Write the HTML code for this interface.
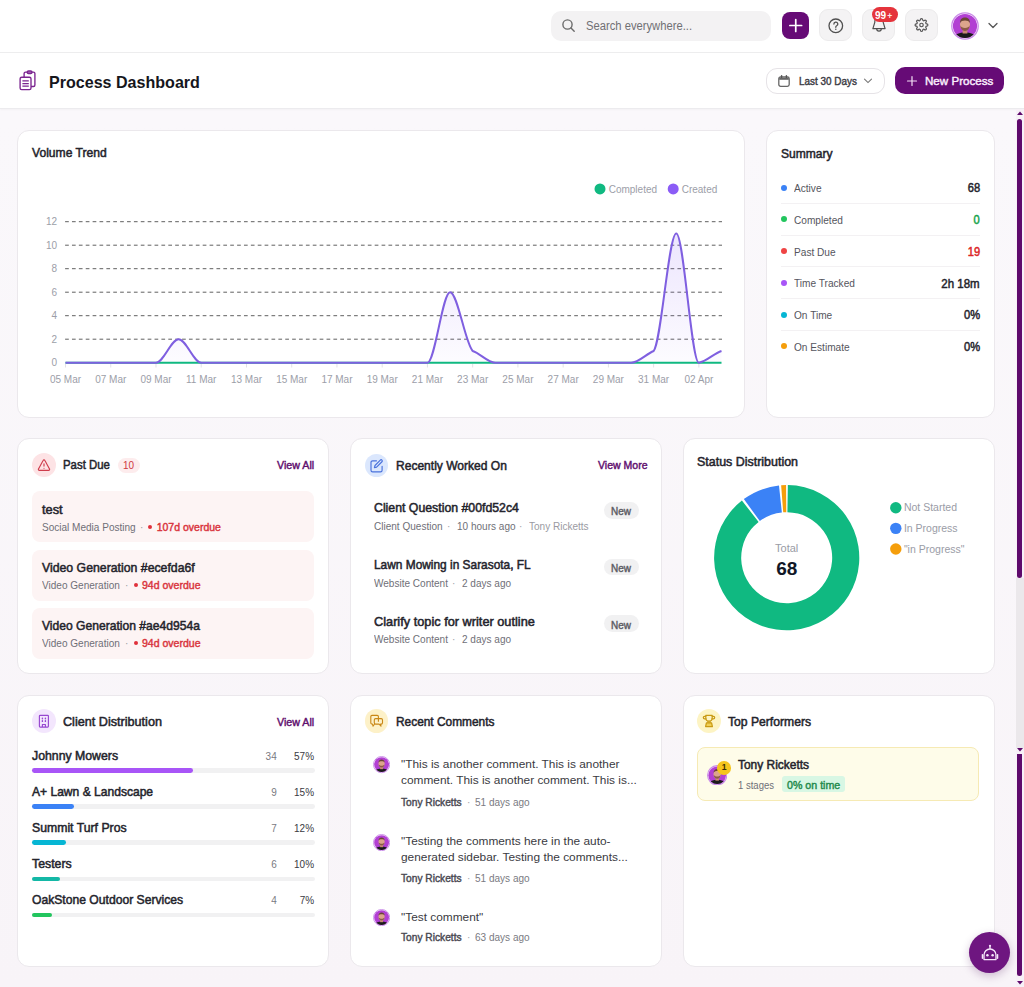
<!DOCTYPE html>
<html><head><meta charset="utf-8">
<style>
*{box-sizing:border-box;margin:0;padding:0}
html,body{width:1024px;height:987px;overflow:hidden;background:linear-gradient(#faf8fb 0,#faf8fb 120px,#f8f4f8 987px);font-family:"Liberation Sans",sans-serif;color:#1f2028}
.abs{position:absolute}
.nw{white-space:nowrap}
.card{position:absolute;background:#fff;border:1px solid #ebe8ec;border-radius:12px}
</style></head><body>

<div class="abs" style="left:0.00px;top:0.00px;width:1024.00px;height:53.00px;background:#fff;border-radius:0px;border-bottom:1px solid #ededee"></div>
<div class="abs" style="left:551.00px;top:11.00px;width:220.00px;height:30.00px;background:#f3f2f3;border-radius:10px;"></div>
<svg class="abs" style="left:561.00px;top:18.00px;overflow:visible" width="15" height="15" viewBox="0 0 15 15"><circle cx="6.5" cy="6.5" r="4.6" fill="none" stroke="#6b6b6b" stroke-width="1.4"/><path d="M10 10 L13.2 13.2" stroke="#6b6b6b" stroke-width="1.4" stroke-linecap="round"/></svg>
<div class="abs nw" style="left:586.00px;transform-origin:0 0;top:20.00px;font-size:12px;line-height:1;font-weight:400;color:#707074;transform:scaleX(0.935);">Search everywhere...</div>
<div class="abs" style="left:781.50px;top:12.00px;width:27.50px;height:27.00px;background:#660b76;border-radius:8px;"></div>
<svg class="abs" style="left:781.50px;top:12.00px;overflow:visible" width="27.5" height="27" viewBox="0 0 27.5 27"><path d="M13.75 7.6V19.4M7.85 13.5H19.65" stroke="#fff" stroke-width="1.7" stroke-linecap="round"/></svg>
<div class="abs" style="left:819.00px;top:9.00px;width:33.00px;height:32.00px;background:#f4f3f4;border-radius:9px;border:1px solid #ecebec"></div>
<div class="abs" style="left:862.00px;top:9.00px;width:33.00px;height:32.00px;background:#f4f3f4;border-radius:9px;border:1px solid #ecebec"></div>
<div class="abs" style="left:905.00px;top:9.00px;width:33.00px;height:32.00px;background:#f4f3f4;border-radius:9px;border:1px solid #ecebec"></div>
<svg class="abs" style="left:819.00px;top:9.00px;overflow:visible" width="33" height="32" viewBox="0 0 33 32"><g fill="none" stroke="#505050" stroke-width="1.3" stroke-linecap="round"><circle cx="16.8" cy="16.8" r="6.8"/><path d="M14.9 15a1.95 1.95 0 1 1 2.8 1.75c-.6.3-.9.7-.9 1.3v.3"/></g><circle cx="16.8" cy="20.2" r=".75" fill="#505050"/></svg>
<svg class="abs" style="left:862.00px;top:9.00px;overflow:visible" width="33" height="32" viewBox="0 0 33 32"><g fill="none" stroke="#505050" stroke-width="1.2" stroke-linejoin="round" stroke-linecap="round"><path d="M12.8 12.5v.8L10.9 19.6h12.2l-1.9-6.3v-.8a4.2 4.2 0 0 0-8.4 0Z"/><path d="M14.7 19.8a2.3 2.3 0 0 0 4.6 0"/></g></svg>
<div class="abs" style="left:872.00px;top:7.20px;width:25.80px;height:14.80px;background:#e5343c;border-radius:7.4px;"></div>
<div class="abs nw" style="left:874.8px;top:10px;font-size:10.8px;line-height:1;font-weight:700;color:#fff;transform:scaleX(0.93);transform-origin:0 0">99</div>
<div class="abs nw" style="left:887.3px;top:11.5px;font-size:8.5px;line-height:1;font-weight:700;color:#fde8e8">+</div>
<svg class="abs" style="left:905.00px;top:9.00px;overflow:visible" width="33" height="32" viewBox="0 0 33 32"><g transform="translate(9.5,9) scale(0.583)"><path d="M12 15a3 3 0 1 0 0-6 3 3 0 0 0 0 6Z" fill="none" stroke="#555" stroke-width="2.05"/><path d="M19.4 15a1.65 1.65 0 0 0 .33 1.82l.06.06a2 2 0 1 1-2.83 2.83l-.06-.06a1.65 1.65 0 0 0-1.820-.33 1.65 1.65 0 0 0-1 1.51V21a2 2 0 1 1-4 0v-.09A1.65 1.65 0 0 0 9 19.4a1.65 1.65 0 0 0-1.82.33l-.06.06a2 2 0 1 1-2.83-2.83l.06-.06A1.65 1.65 0 0 0 4.68 15a1.65 1.65 0 0 0-1.51-1H3a2 2 0 1 1 0-4h.09A1.65 1.65 0 0 0 4.6 9a1.65 1.65 0 0 0-.33-1.82l-.06-.06a2 2 0 1 1 2.830-2.83l.06.06A1.65 1.65 0 0 0 9 4.68a1.65 1.65 0 0 0 1-1.51V3a2 2 0 1 1 4 0v.09a1.65 1.65 0 0 0 1 1.51 1.65 1.65 0 0 0 1.82-.33l.06-.06a2 2 0 1 1 2.83 2.83l-.06.06A1.65 1.65 0 0 0 19.4 9a1.65 1.65 0 0 0 1.51 1H21a2 2 0 1 1 0 4h-.09a1.65 1.65 0 0 0-1.51 1Z" fill="none" stroke="#555" stroke-width="2.05"/></g></svg>
<svg class="abs" style="left:951.00px;top:12.00px;overflow:visible" width="28" height="28" viewBox="0 0 28 28"><defs><clipPath id="av1"><circle cx="14" cy="14" r="12.1"/></clipPath></defs><circle cx="14" cy="14" r="13.2" fill="#fff" stroke="#c98ae8" stroke-width="1.3"/><g clip-path="url(#av1)"><rect width="28" height="28" fill="#b23fd3"/><path d="M2 28c.8-5.5 5.5-7.6 12-7.6s11.2 2.1 12 7.6Z" fill="#1c1a1c"/><rect x="11.6" y="17" width="4.8" height="4.5" fill="#c98a74"/><ellipse cx="14" cy="12.6" rx="5" ry="6" fill="#dca48c"/><path d="M9.2 13.5c.3 3.6 2.2 5.4 4.8 5.4s4.5-1.8 4.8-5.4c-.8 1.6-2.4 2.4-4.8 2.4s-4-.8-4.8-2.4Z" fill="#8a5a48"/><path d="M9 11c0-3.6 2.2-5.4 5-5.4s5 1.8 5 5.4c-.9-1.9-2.6-2.6-5-2.6S9.9 9.1 9 11Z" fill="#6b4636"/></g></svg>
<svg class="abs" style="left:987.00px;top:21.00px;overflow:visible" width="12" height="9" viewBox="0 0 12 9"><path d="M2 2.5l4 4 4-4" fill="none" stroke="#555" stroke-width="1.3" stroke-linecap="round" stroke-linejoin="round"/></svg>
<div class="abs" style="left:0.00px;top:53.00px;width:1024.00px;height:56.00px;background:#fff;border-radius:0px;border-bottom:1px solid #ecebee;box-shadow:0 1px 2px rgba(0,0,0,.03)"></div>
<svg class="abs" style="left:14.00px;top:66.00px;overflow:visible" width="26" height="28" viewBox="0 0 26 28"><g fill="none" stroke="#7b2590" stroke-width="1.35" stroke-linejoin="round"><path d="M10.1 11.2V7.6a1.5 1.5 0 0 1 1.5-1.5h7.8a1.5 1.5 0 0 1 1.5 1.5V19a1.5 1.5 0 0 1-1.5 1.5H17"/><rect x="13.2" y="5" width="4.8" height="2.6" rx="1.3"/><rect x="6.1" y="11.2" width="10.9" height="12.4" rx="1.6"/><path d="M8.4 14.8h6.4M8.4 17.5h6.4M8.4 20.1h6.4" stroke-width="1.25"/></g></svg>
<div class="abs nw" style="left:49.00px;transform-origin:0 0;top:75.00px;font-size:16.9px;line-height:1;font-weight:700;color:#16161c;transform:scaleX(0.951);">Process Dashboard</div>
<div class="abs" style="left:766.00px;top:68.00px;width:118.50px;height:25.50px;background:#fff;border-radius:11px;border:1px solid #e6e3e7"></div>
<svg class="abs" style="left:777.00px;top:74.00px;overflow:visible" width="14" height="14" viewBox="0 0 14 14"><rect x="1.8" y="2.9" width="10.4" height="9.4" rx="1.8" fill="none" stroke="#666" stroke-width="1.3"/><path d="M2.2 4.6h9.6" stroke="#666" stroke-width="2.4"/><path d="M4.6 1.6v1.8M9.4 1.6v1.8" stroke="#555" stroke-width="1.4" stroke-linecap="round"/></svg>
<div class="abs nw" style="left:798.70px;transform-origin:0 0;top:77.00px;font-size:10.2px;line-height:1;font-weight:400;color:#3c3c44;transform:scaleX(0.974);-webkit-text-stroke:0.4px #3c3c44;">Last 30 Days</div>
<svg class="abs" style="left:863.00px;top:77.00px;overflow:visible" width="10" height="8" viewBox="0 0 10 8"><path d="M1.5 2.2l3.5 3.4 3.5-3.4" fill="none" stroke="#777" stroke-width="1.1" stroke-linecap="round"/></svg>
<div class="abs" style="left:895.00px;top:67.00px;width:108.50px;height:27.00px;background:#660b76;border-radius:10px;"></div>
<svg class="abs" style="left:906.00px;top:75.00px;overflow:visible" width="12" height="12" viewBox="0 0 12 12"><path d="M6 1.5v9M1.5 6h9" stroke="#f3dff6" stroke-width="1.2" stroke-linecap="round"/></svg>
<div class="abs nw" style="left:924.60px;transform-origin:0 0;top:75.00px;font-size:11.7px;line-height:1;font-weight:400;color:#fbeefd;transform:scaleX(0.992);-webkit-text-stroke:0.42px #fbeefd;">New Process</div>
<div class="abs" style="left:1016.00px;top:109.00px;width:8.00px;height:878.00px;background:#f7f1f7;border-radius:0px;"></div>
<div class="abs" style="left:1016.00px;top:578.00px;width:8.00px;height:170.00px;background:#ebe8eb;border-radius:0px;"></div>
<div class="abs" style="left:1017.00px;top:119.00px;width:5.00px;height:459.00px;background:#5e0a6c;border-radius:3px;"></div>
<svg class="abs" style="left:1016.00px;top:110.00px;overflow:visible" width="8" height="6" viewBox="0 0 8 6"><path d="M1 5L4 1.5L7 5Z" fill="#5e0a6c"/></svg>
<svg class="abs" style="left:1016.00px;top:747.00px;overflow:visible" width="8" height="6" viewBox="0 0 8 6"><path d="M1 1L4 4.5L7 1Z" fill="#5e0a6c"/></svg>
<div class="abs" style="left:1017.00px;top:754.00px;width:5.00px;height:222.00px;background:#5e0a6c;border-radius:0px;border-radius:0 0 3px 3px"></div>
<svg class="abs" style="left:1016.00px;top:980.00px;overflow:visible" width="8" height="6" viewBox="0 0 8 6"><path d="M1 1L4 4.5L7 1Z" fill="#5e0a6c"/></svg>
<div class="card" style="left:17px;top:130px;width:728px;height:288px"></div>
<div class="card" style="left:766px;top:130px;width:229px;height:288px"></div>
<div class="card" style="left:17px;top:438px;width:312px;height:236px"></div>
<div class="card" style="left:350px;top:438px;width:312px;height:236px"></div>
<div class="card" style="left:683px;top:438px;width:312px;height:236px"></div>
<div class="card" style="left:17px;top:695px;width:312px;height:272px"></div>
<div class="card" style="left:350px;top:695px;width:312px;height:272px"></div>
<div class="card" style="left:683px;top:695px;width:312px;height:272px"></div>
<div class="abs nw" style="left:32.20px;transform-origin:0 0;top:147.00px;font-size:12.3px;line-height:1;font-weight:400;color:#24242c;transform:scaleX(0.984);-webkit-text-stroke:0.5px #24242c;">Volume Trend</div>
<svg class="abs" style="left:0;top:0" width="1024" height="430" viewBox="0 0 1024 430">
<defs><linearGradient id="ga" x1="0" y1="0" x2="0" y2="1"><stop offset="0" stop-color="#8b5cf6" stop-opacity=".16"/><stop offset="1" stop-color="#8b5cf6" stop-opacity=".02"/></linearGradient></defs>
<g font-family="Liberation Sans" font-size="10" fill="#9c9ea8"><text x="57" y="366.40" text-anchor="end">0</text><line x1="65.1" y1="339.20" x2="722" y2="339.20" stroke="#606060" stroke-width="1" stroke-dasharray="3.7 3.18"/><text x="57" y="342.90" text-anchor="end">2</text><line x1="65.1" y1="315.70" x2="722" y2="315.70" stroke="#606060" stroke-width="1" stroke-dasharray="3.7 3.18"/><text x="57" y="319.40" text-anchor="end">4</text><line x1="65.1" y1="292.20" x2="722" y2="292.20" stroke="#606060" stroke-width="1" stroke-dasharray="3.7 3.18"/><text x="57" y="295.90" text-anchor="end">6</text><line x1="65.1" y1="268.70" x2="722" y2="268.70" stroke="#606060" stroke-width="1" stroke-dasharray="3.7 3.18"/><text x="57" y="272.40" text-anchor="end">8</text><line x1="65.1" y1="245.20" x2="722" y2="245.20" stroke="#606060" stroke-width="1" stroke-dasharray="3.7 3.18"/><text x="57" y="248.90" text-anchor="end">10</text><line x1="65.1" y1="221.70" x2="722" y2="221.70" stroke="#606060" stroke-width="1" stroke-dasharray="3.7 3.18"/><text x="57" y="225.40" text-anchor="end">12</text><line x1="65.50" y1="364" x2="65.50" y2="367.5" stroke="#e2e2e6" stroke-width="1"/><text x="65.50" y="383.4" text-anchor="middle">05 Mar</text><line x1="110.74" y1="364" x2="110.74" y2="367.5" stroke="#e2e2e6" stroke-width="1"/><text x="110.74" y="383.4" text-anchor="middle">07 Mar</text><line x1="155.98" y1="364" x2="155.98" y2="367.5" stroke="#e2e2e6" stroke-width="1"/><text x="155.98" y="383.4" text-anchor="middle">09 Mar</text><line x1="201.22" y1="364" x2="201.22" y2="367.5" stroke="#e2e2e6" stroke-width="1"/><text x="201.22" y="383.4" text-anchor="middle">11 Mar</text><line x1="246.47" y1="364" x2="246.47" y2="367.5" stroke="#e2e2e6" stroke-width="1"/><text x="246.47" y="383.4" text-anchor="middle">13 Mar</text><line x1="291.71" y1="364" x2="291.71" y2="367.5" stroke="#e2e2e6" stroke-width="1"/><text x="291.71" y="383.4" text-anchor="middle">15 Mar</text><line x1="336.95" y1="364" x2="336.95" y2="367.5" stroke="#e2e2e6" stroke-width="1"/><text x="336.95" y="383.4" text-anchor="middle">17 Mar</text><line x1="382.19" y1="364" x2="382.19" y2="367.5" stroke="#e2e2e6" stroke-width="1"/><text x="382.19" y="383.4" text-anchor="middle">19 Mar</text><line x1="427.43" y1="364" x2="427.43" y2="367.5" stroke="#e2e2e6" stroke-width="1"/><text x="427.43" y="383.4" text-anchor="middle">21 Mar</text><line x1="472.67" y1="364" x2="472.67" y2="367.5" stroke="#e2e2e6" stroke-width="1"/><text x="472.67" y="383.4" text-anchor="middle">23 Mar</text><line x1="517.91" y1="364" x2="517.91" y2="367.5" stroke="#e2e2e6" stroke-width="1"/><text x="517.91" y="383.4" text-anchor="middle">25 Mar</text><line x1="563.16" y1="364" x2="563.16" y2="367.5" stroke="#e2e2e6" stroke-width="1"/><text x="563.16" y="383.4" text-anchor="middle">27 Mar</text><line x1="608.40" y1="364" x2="608.40" y2="367.5" stroke="#e2e2e6" stroke-width="1"/><text x="608.40" y="383.4" text-anchor="middle">29 Mar</text><line x1="653.64" y1="364" x2="653.64" y2="367.5" stroke="#e2e2e6" stroke-width="1"/><text x="653.64" y="383.4" text-anchor="middle">31 Mar</text><line x1="698.88" y1="364" x2="698.88" y2="367.5" stroke="#e2e2e6" stroke-width="1"/><text x="698.88" y="383.4" text-anchor="middle">02 Apr</text></g>
<path d="M65.50,362.70 C73.04,362.70 80.58,362.70 88.12,362.70 C95.66,362.70 103.20,362.70 110.74,362.70 C118.28,362.70 125.82,362.70 133.36,362.70 C140.90,362.70 148.44,362.70 155.98,362.70 C163.52,362.70 171.06,339.20 178.60,339.20 C186.14,339.20 193.68,362.70 201.22,362.70 C208.76,362.70 216.30,362.70 223.84,362.70 C231.39,362.70 238.93,362.70 246.47,362.70 C254.01,362.70 261.55,362.70 269.09,362.70 C276.63,362.70 284.17,362.70 291.71,362.70 C299.25,362.70 306.79,362.70 314.33,362.70 C321.87,362.70 329.41,362.70 336.95,362.70 C344.49,362.70 352.03,362.70 359.57,362.70 C367.11,362.70 374.65,362.70 382.19,362.70 C389.73,362.70 397.27,362.70 404.81,362.70 C412.35,362.70 419.89,362.70 427.43,362.70 C434.97,362.70 442.51,292.20 450.05,292.20 C457.59,292.20 465.13,343.12 472.67,350.95 C480.21,353.21 487.75,362.70 495.29,362.70 C502.83,362.70 510.37,362.70 517.91,362.70 C525.45,362.70 532.99,362.70 540.53,362.70 C548.07,362.70 555.61,362.70 563.16,362.70 C570.70,362.70 578.24,362.70 585.78,362.70 C593.32,362.70 600.86,362.70 608.40,362.70 C615.94,362.70 623.48,362.70 631.02,362.70 C638.56,362.70 646.10,353.97 653.64,350.95 C661.18,343.12 668.72,233.45 676.26,233.45 C683.80,233.45 691.34,362.70 698.88,362.70 C706.42,361.57 713.96,353.21 721.50,350.95 L721.50,362.70 L65.50,362.70 Z" fill="url(#ga)"/>
<line x1="65.5" y1="362.7" x2="721.5" y2="362.7" stroke="#10b981" stroke-width="2"/>
<path d="M65.50,362.70 C73.04,362.70 80.58,362.70 88.12,362.70 C95.66,362.70 103.20,362.70 110.74,362.70 C118.28,362.70 125.82,362.70 133.36,362.70 C140.90,362.70 148.44,362.70 155.98,362.70 C163.52,362.70 171.06,339.20 178.60,339.20 C186.14,339.20 193.68,362.70 201.22,362.70 C208.76,362.70 216.30,362.70 223.84,362.70 C231.39,362.70 238.93,362.70 246.47,362.70 C254.01,362.70 261.55,362.70 269.09,362.70 C276.63,362.70 284.17,362.70 291.71,362.70 C299.25,362.70 306.79,362.70 314.33,362.70 C321.87,362.70 329.41,362.70 336.95,362.70 C344.49,362.70 352.03,362.70 359.57,362.70 C367.11,362.70 374.65,362.70 382.19,362.70 C389.73,362.70 397.27,362.70 404.81,362.70 C412.35,362.70 419.89,362.70 427.43,362.70 C434.97,362.70 442.51,292.20 450.05,292.20 C457.59,292.20 465.13,343.12 472.67,350.95 C480.21,353.21 487.75,362.70 495.29,362.70 C502.83,362.70 510.37,362.70 517.91,362.70 C525.45,362.70 532.99,362.70 540.53,362.70 C548.07,362.70 555.61,362.70 563.16,362.70 C570.70,362.70 578.24,362.70 585.78,362.70 C593.32,362.70 600.86,362.70 608.40,362.70 C615.94,362.70 623.48,362.70 631.02,362.70 C638.56,362.70 646.10,353.97 653.64,350.95 C661.18,343.12 668.72,233.45 676.26,233.45 C683.80,233.45 691.34,362.70 698.88,362.70 C706.42,361.57 713.96,353.21 721.50,350.95" fill="none" stroke="#7f5fe0" stroke-width="2"/>
<circle cx="600" cy="188.9" r="5.5" fill="#10b981"/><text x="608.7" y="192.5" font-family="Liberation Sans" font-size="10" fill="#9c9ea8">Completed</text>
<circle cx="673.2" cy="188.9" r="5.5" fill="#8b5cf6"/><text x="681.7" y="192.5" font-family="Liberation Sans" font-size="10" fill="#9c9ea8">Created</text>
</svg>
<div class="abs nw" style="left:780.70px;transform-origin:0 0;top:148.00px;font-size:12.3px;line-height:1;font-weight:400;color:#24242c;transform:scaleX(0.981);-webkit-text-stroke:0.5px #24242c;">Summary</div>
<div class="abs" style="left:781.00px;top:184.70px;width:6.00px;height:6.00px;background:#3b82f6;border-radius:3px;"></div>
<div class="abs nw" style="left:794.30px;transform-origin:0 0;top:183.00px;font-size:11px;line-height:1;font-weight:400;color:#55555d;transform:scaleX(0.920);">Active</div>
<div class="abs nw" style="right:44.20px;transform-origin:100% 0;top:183.00px;font-size:11.9px;line-height:1;font-weight:400;color:#24242c;transform:scaleX(0.935);-webkit-text-stroke:0.48px #24242c;">68</div>
<div class="abs" style="left:781.00px;top:202.90px;width:199.00px;height:1.00px;background:#f3f1f3;border-radius:0px;"></div>
<div class="abs" style="left:781.00px;top:216.45px;width:6.00px;height:6.00px;background:#22c55e;border-radius:3px;"></div>
<div class="abs nw" style="left:794.30px;transform-origin:0 0;top:215.00px;font-size:11px;line-height:1;font-weight:400;color:#55555d;transform:scaleX(0.920);">Completed</div>
<div class="abs nw" style="right:44.20px;transform-origin:100% 0;top:215.00px;font-size:11.9px;line-height:1;font-weight:400;color:#16a34a;transform:scaleX(0.935);-webkit-text-stroke:0.48px #16a34a;">0</div>
<div class="abs" style="left:781.00px;top:234.65px;width:199.00px;height:1.00px;background:#f3f1f3;border-radius:0px;"></div>
<div class="abs" style="left:781.00px;top:248.20px;width:6.00px;height:6.00px;background:#ef4444;border-radius:3px;"></div>
<div class="abs nw" style="left:794.30px;transform-origin:0 0;top:247.00px;font-size:11px;line-height:1;font-weight:400;color:#55555d;transform:scaleX(0.920);">Past Due</div>
<div class="abs nw" style="right:44.20px;transform-origin:100% 0;top:247.00px;font-size:11.9px;line-height:1;font-weight:400;color:#dc2626;transform:scaleX(0.935);-webkit-text-stroke:0.48px #dc2626;">19</div>
<div class="abs" style="left:781.00px;top:266.40px;width:199.00px;height:1.00px;background:#f3f1f3;border-radius:0px;"></div>
<div class="abs" style="left:781.00px;top:279.95px;width:6.00px;height:6.00px;background:#a855f7;border-radius:3px;"></div>
<div class="abs nw" style="left:794.30px;transform-origin:0 0;top:278.00px;font-size:11px;line-height:1;font-weight:400;color:#55555d;transform:scaleX(0.920);">Time Tracked</div>
<div class="abs nw" style="right:44.20px;transform-origin:100% 0;top:279.00px;font-size:11.9px;line-height:1;font-weight:400;color:#24242c;transform:scaleX(0.966);-webkit-text-stroke:0.48px #24242c;">2h 18m</div>
<div class="abs" style="left:781.00px;top:298.15px;width:199.00px;height:1.00px;background:#f3f1f3;border-radius:0px;"></div>
<div class="abs" style="left:781.00px;top:311.70px;width:6.00px;height:6.00px;background:#06b6d4;border-radius:3px;"></div>
<div class="abs nw" style="left:794.30px;transform-origin:0 0;top:310.00px;font-size:11px;line-height:1;font-weight:400;color:#55555d;transform:scaleX(0.920);">On Time</div>
<div class="abs nw" style="right:44.20px;transform-origin:100% 0;top:310.00px;font-size:11.9px;line-height:1;font-weight:400;color:#24242c;transform:scaleX(0.935);-webkit-text-stroke:0.48px #24242c;">0%</div>
<div class="abs" style="left:781.00px;top:329.90px;width:199.00px;height:1.00px;background:#f3f1f3;border-radius:0px;"></div>
<div class="abs" style="left:781.00px;top:343.45px;width:6.00px;height:6.00px;background:#f59e0b;border-radius:3px;"></div>
<div class="abs nw" style="left:794.30px;transform-origin:0 0;top:342.00px;font-size:11px;line-height:1;font-weight:400;color:#55555d;transform:scaleX(0.920);">On Estimate</div>
<div class="abs nw" style="right:44.20px;transform-origin:100% 0;top:342.00px;font-size:11.9px;line-height:1;font-weight:400;color:#24242c;transform:scaleX(0.935);-webkit-text-stroke:0.48px #24242c;">0%</div>
<div class="abs" style="left:32.20px;top:453.00px;width:24.00px;height:24.00px;background:#fde3e5;border-radius:12px;"></div>
<svg class="abs" style="left:32.00px;top:453.00px;overflow:visible" width="24" height="24" viewBox="0 0 24 24"><g fill="none" stroke="#cf3c4c" stroke-width="1.15" stroke-linecap="round" stroke-linejoin="round"><path d="M17.5 15.9 12.9 7.4a1 1 0 0 0-1.8 0L6.5 15.9a1 1 0 0 0 .9 1.5h9.2a1 1 0 0 0 .9-1.5Z"/><path d="M12 10.9v2.2M12 15.2h.01"/></g></svg>
<div class="abs nw" style="left:63.40px;transform-origin:0 0;top:459.00px;font-size:12.3px;line-height:1;font-weight:400;color:#24242c;transform:scaleX(0.927);-webkit-text-stroke:0.5px #24242c;">Past Due</div>
<div class="abs" style="left:118.40px;top:458.30px;width:22.00px;height:15.00px;background:#fdeced;border-radius:8px;"></div>
<div class="abs nw" style="left:123.30px;transform-origin:0 0;top:460.00px;font-size:10.5px;line-height:1;font-weight:400;color:#d0383f;transform:scaleX(0.950);">10</div>
<div class="abs nw" style="left:277.10px;transform-origin:0 0;top:460.00px;font-size:10.5px;line-height:1;font-weight:400;color:#5f0f6e;transform:scaleX(1.017);-webkit-text-stroke:0.42px #5f0f6e;">View All</div>
<div class="abs" style="left:32.30px;top:491.40px;width:282.20px;height:51.00px;background:#fdf4f4;border-radius:8px;"></div>
<div class="abs nw" style="left:41.80px;transform-origin:0 0;top:504.00px;font-size:12.2px;line-height:1;font-weight:400;color:#24242c;transform:scaleX(1.051);-webkit-text-stroke:0.5px #24242c;">test</div>
<div class="abs nw" style="left:41.80px;transform-origin:0 0;top:522.00px;font-size:10.5px;line-height:1;font-weight:400;color:#6f6f77;transform:scaleX(0.955);">Social Media Posting</div>
<div class="abs nw" style="left:139.80px;transform-origin:0 0;top:522.00px;font-size:10.5px;line-height:1;font-weight:400;color:#9a9aa2;transform:scaleX(0.955);">·</div>
<div class="abs" style="left:148.30px;top:525.00px;width:4.20px;height:4.20px;background:#e0303a;border-radius:2.1px;"></div>
<div class="abs nw" style="left:156.70px;transform-origin:0 0;top:522.00px;font-size:10.5px;line-height:1;font-weight:400;color:#d9343d;-webkit-text-stroke:0.42px #d9343d;">107d overdue</div>
<div class="abs" style="left:32.30px;top:549.50px;width:282.20px;height:51.00px;background:#fdf4f4;border-radius:8px;"></div>
<div class="abs nw" style="left:41.80px;transform-origin:0 0;top:562.00px;font-size:12.2px;line-height:1;font-weight:400;color:#24242c;transform:scaleX(1.008);-webkit-text-stroke:0.5px #24242c;">Video Generation #ecefda6f</div>
<div class="abs nw" style="left:41.80px;transform-origin:0 0;top:580.00px;font-size:10.5px;line-height:1;font-weight:400;color:#6f6f77;transform:scaleX(0.955);">Video Generation</div>
<div class="abs nw" style="left:125.30px;transform-origin:0 0;top:580.00px;font-size:10.5px;line-height:1;font-weight:400;color:#9a9aa2;transform:scaleX(0.955);">·</div>
<div class="abs" style="left:133.80px;top:583.10px;width:4.20px;height:4.20px;background:#e0303a;border-radius:2.1px;"></div>
<div class="abs nw" style="left:142.20px;transform-origin:0 0;top:580.00px;font-size:10.5px;line-height:1;font-weight:400;color:#d9343d;transform:scaleX(1.003);-webkit-text-stroke:0.42px #d9343d;">94d overdue</div>
<div class="abs" style="left:32.30px;top:607.60px;width:282.20px;height:51.00px;background:#fdf4f4;border-radius:8px;"></div>
<div class="abs nw" style="left:41.80px;transform-origin:0 0;top:620.00px;font-size:12.2px;line-height:1;font-weight:400;color:#24242c;transform:scaleX(0.993);-webkit-text-stroke:0.5px #24242c;">Video Generation #ae4d954a</div>
<div class="abs nw" style="left:41.80px;transform-origin:0 0;top:638.00px;font-size:10.5px;line-height:1;font-weight:400;color:#6f6f77;transform:scaleX(0.955);">Video Generation</div>
<div class="abs nw" style="left:125.30px;transform-origin:0 0;top:638.00px;font-size:10.5px;line-height:1;font-weight:400;color:#9a9aa2;transform:scaleX(0.955);">·</div>
<div class="abs" style="left:133.80px;top:641.20px;width:4.20px;height:4.20px;background:#e0303a;border-radius:2.1px;"></div>
<div class="abs nw" style="left:142.20px;transform-origin:0 0;top:638.00px;font-size:10.5px;line-height:1;font-weight:400;color:#d9343d;transform:scaleX(1.003);-webkit-text-stroke:0.42px #d9343d;">94d overdue</div>
<div class="abs" style="left:365.30px;top:453.80px;width:22.50px;height:22.80px;background:#dbe7fd;border-radius:12px;"></div>
<svg class="abs" style="left:365.00px;top:454.00px;overflow:visible" width="23" height="23" viewBox="0 0 23 23"><g fill="none" stroke="#4a72dc" stroke-width="1.15" stroke-linecap="round" stroke-linejoin="round"><path d="M11.5 6.8H7.6a1.6 1.6 0 0 0-1.6 1.6v7.9a1.6 1.6 0 0 0 1.6 1.6h7.9a1.6 1.6 0 0 0 1.6-1.6v-4"/><path d="M15.3 6.1a1.15 1.15 0 0 1 1.65 1.65L11.6 13.1l-2.2.6.6-2.2Z"/></g></svg>
<div class="abs nw" style="left:396.00px;transform-origin:0 0;top:460.00px;font-size:12.3px;line-height:1;font-weight:400;color:#24242c;transform:scaleX(0.979);-webkit-text-stroke:0.5px #24242c;">Recently Worked On</div>
<div class="abs nw" style="left:597.60px;transform-origin:0 0;top:460.00px;font-size:10.5px;line-height:1;font-weight:400;color:#5f0f6e;transform:scaleX(1.002);-webkit-text-stroke:0.42px #5f0f6e;">View More</div>
<div class="abs nw" style="left:373.50px;transform-origin:0 0;top:502.00px;font-size:12.2px;line-height:1;font-weight:400;color:#24242c;transform:scaleX(1.009);-webkit-text-stroke:0.5px #24242c;">Client Question #00fd52c4</div>
<div class="abs nw" style="left:373.50px;transform-origin:0 0;top:521.00px;font-size:10.5px;line-height:1;font-weight:400;color:#6f6f77;transform:scaleX(0.955);">Client Question</div>
<div class="abs nw" style="left:456.70px;transform-origin:0 0;top:521.00px;font-size:10.5px;line-height:1;font-weight:400;color:#6f6f77;transform:scaleX(0.955);">10 hours ago</div>
<div class="abs nw" style="left:447.20px;transform-origin:0 0;top:521.00px;font-size:10.5px;line-height:1;font-weight:400;color:#a0a0a8;transform:scaleX(0.955);">·</div>
<div class="abs nw" style="left:528.50px;transform-origin:0 0;top:521.00px;font-size:10.5px;line-height:1;font-weight:400;color:#9a9aa2;transform:scaleX(0.955);">Tony Ricketts</div>
<div class="abs nw" style="left:519.00px;transform-origin:0 0;top:521.00px;font-size:10.5px;line-height:1;font-weight:400;color:#a0a0a8;transform:scaleX(0.955);">·</div>
<div class="abs" style="left:604.00px;top:502.00px;width:34.60px;height:16.80px;background:#f1f1f2;border-radius:8.4px;"></div>
<div class="abs nw" style="left:611.00px;transform-origin:0 0;top:507.00px;font-size:10.2px;line-height:1;font-weight:400;color:#5c5c64;transform:scaleX(0.976);-webkit-text-stroke:0.4px #5c5c64;">New</div>
<div class="abs nw" style="left:373.50px;transform-origin:0 0;top:559.00px;font-size:12.2px;line-height:1;font-weight:400;color:#24242c;transform:scaleX(0.976);-webkit-text-stroke:0.5px #24242c;">Lawn Mowing in Sarasota, FL</div>
<div class="abs nw" style="left:373.50px;transform-origin:0 0;top:578.00px;font-size:10.5px;line-height:1;font-weight:400;color:#6f6f77;transform:scaleX(0.955);">Website Content</div>
<div class="abs nw" style="left:461.50px;transform-origin:0 0;top:578.00px;font-size:10.5px;line-height:1;font-weight:400;color:#6f6f77;transform:scaleX(0.955);">2 days ago</div>
<div class="abs nw" style="left:452.00px;transform-origin:0 0;top:578.00px;font-size:10.5px;line-height:1;font-weight:400;color:#a0a0a8;transform:scaleX(0.955);">·</div>
<div class="abs" style="left:604.00px;top:558.70px;width:34.60px;height:16.80px;background:#f1f1f2;border-radius:8.4px;"></div>
<div class="abs nw" style="left:611.00px;transform-origin:0 0;top:564.00px;font-size:10.2px;line-height:1;font-weight:400;color:#5c5c64;transform:scaleX(0.976);-webkit-text-stroke:0.4px #5c5c64;">New</div>
<div class="abs nw" style="left:373.50px;transform-origin:0 0;top:616.00px;font-size:12.2px;line-height:1;font-weight:400;color:#24242c;transform:scaleX(1.046);-webkit-text-stroke:0.5px #24242c;">Clarify topic for writer outline</div>
<div class="abs nw" style="left:373.50px;transform-origin:0 0;top:634.00px;font-size:10.5px;line-height:1;font-weight:400;color:#6f6f77;transform:scaleX(0.955);">Website Content</div>
<div class="abs nw" style="left:461.50px;transform-origin:0 0;top:634.00px;font-size:10.5px;line-height:1;font-weight:400;color:#6f6f77;transform:scaleX(0.955);">2 days ago</div>
<div class="abs nw" style="left:452.00px;transform-origin:0 0;top:634.00px;font-size:10.5px;line-height:1;font-weight:400;color:#a0a0a8;transform:scaleX(0.955);">·</div>
<div class="abs" style="left:604.00px;top:615.40px;width:34.60px;height:16.80px;background:#f1f1f2;border-radius:8.4px;"></div>
<div class="abs nw" style="left:611.00px;transform-origin:0 0;top:621.00px;font-size:10.2px;line-height:1;font-weight:400;color:#5c5c64;transform:scaleX(0.976);-webkit-text-stroke:0.4px #5c5c64;">New</div>
<div class="abs nw" style="left:697.30px;transform-origin:0 0;top:456.00px;font-size:12.3px;line-height:1;font-weight:400;color:#24242c;transform:scaleX(1.012);-webkit-text-stroke:0.5px #24242c;">Status Distribution</div>
<svg class="abs" style="left:0.00px;top:0.00px;overflow:visible" width="1024" height="987" viewBox="0 0 1024 987"><path d="M787.84,485.11 A72.6,72.6 0 1 1 741.90,500.57 L758.62,521.89 A45.5,45.5 0 1 0 787.41,512.21 Z" fill="#10b981"/><path d="M743.82,499.11 A72.6,72.6 0 0 1 778.99,485.51 L781.86,512.46 A45.5,45.5 0 0 0 759.83,520.98 Z" fill="#3b82f6"/><path d="M781.13,485.31 A72.6,72.6 0 0 1 786.07,485.10 L786.30,512.20 A45.5,45.5 0 0 0 783.21,512.33 Z" fill="#f59e0b"/><text x="786.7" y="551.5" text-anchor="middle" font-family="Liberation Sans" font-size="11" fill="#9a9ca6">Total</text><text x="786.7" y="574.5" text-anchor="middle" font-family="Liberation Sans" font-size="19" font-weight="700" fill="#111827">68</text><circle cx="895.8" cy="507.70" r="5.7" fill="#10b981"/><text x="903.9" y="511.30" font-family="Liberation Sans" font-size="10.5" fill="#9a9ca6">Not Started</text><circle cx="895.8" cy="528.35" r="5.7" fill="#3b82f6"/><text x="903.9" y="531.95" font-family="Liberation Sans" font-size="10.5" fill="#9a9ca6">In Progress</text><circle cx="895.8" cy="549.00" r="5.7" fill="#f59e0b"/><text x="903.9" y="552.60" font-family="Liberation Sans" font-size="10.5" fill="#9a9ca6">"in Progress"</text></svg>
<div class="abs" style="left:32.30px;top:709.40px;width:23.50px;height:23.40px;background:#f3e6fd;border-radius:12px;"></div>
<svg class="abs" style="left:32.00px;top:709.00px;overflow:visible" width="24" height="24" viewBox="0 0 24 24"><g fill="none" stroke="#9747d0" stroke-width="1.15" stroke-linejoin="round"><rect x="7.4" y="6.3" width="9" height="11.8" rx="0.8"/><path d="M10.4 18.1v-2.6h3v2.6"/><path d="M10.4 9.2v.6M13.4 9.2v.6M10.4 11.8v.6M13.4 11.8v.6" stroke-width="1.4" stroke-linecap="round"/></g></svg>
<div class="abs nw" style="left:63.10px;transform-origin:0 0;top:716.00px;font-size:12.3px;line-height:1;font-weight:400;color:#24242c;transform:scaleX(1.027);-webkit-text-stroke:0.5px #24242c;">Client Distribution</div>
<div class="abs nw" style="left:277.10px;transform-origin:0 0;top:717.00px;font-size:10.5px;line-height:1;font-weight:400;color:#5f0f6e;transform:scaleX(1.017);-webkit-text-stroke:0.42px #5f0f6e;">View All</div>
<div class="abs nw" style="left:32.00px;transform-origin:0 0;top:750.00px;font-size:12.2px;line-height:1;font-weight:400;color:#24242c;transform:scaleX(1.008);-webkit-text-stroke:0.5px #24242c;">Johnny Mowers</div>
<div class="abs nw" style="right:747.60px;transform-origin:100% 0;top:751.00px;font-size:10.5px;line-height:1;font-weight:400;color:#7a7a82;transform:scaleX(0.950);">34</div>
<div class="abs nw" style="right:709.50px;transform-origin:100% 0;top:751.00px;font-size:10.5px;line-height:1;font-weight:400;color:#3a3a42;transform:scaleX(0.950);">57%</div>
<div class="abs" style="left:32.00px;top:768.10px;width:282.50px;height:4.80px;background:#f1f1f2;border-radius:2.4px;"></div>
<div class="abs" style="left:32.00px;top:768.10px;width:161.03px;height:4.80px;background:#a855f7;border-radius:2.4px;"></div>
<div class="abs nw" style="left:32.00px;transform-origin:0 0;top:786.00px;font-size:12.2px;line-height:1;font-weight:400;color:#24242c;transform:scaleX(0.990);-webkit-text-stroke:0.5px #24242c;">A+ Lawn &amp; Landscape</div>
<div class="abs nw" style="right:747.60px;transform-origin:100% 0;top:787.00px;font-size:10.5px;line-height:1;font-weight:400;color:#7a7a82;transform:scaleX(0.950);">9</div>
<div class="abs nw" style="right:709.50px;transform-origin:100% 0;top:787.00px;font-size:10.5px;line-height:1;font-weight:400;color:#3a3a42;transform:scaleX(0.950);">15%</div>
<div class="abs" style="left:32.00px;top:804.25px;width:282.50px;height:4.80px;background:#f1f1f2;border-radius:2.4px;"></div>
<div class="abs" style="left:32.00px;top:804.25px;width:42.38px;height:4.80px;background:#3b82f6;border-radius:2.4px;"></div>
<div class="abs nw" style="left:32.00px;transform-origin:0 0;top:822.00px;font-size:12.2px;line-height:1;font-weight:400;color:#24242c;transform:scaleX(1.005);-webkit-text-stroke:0.5px #24242c;">Summit Turf Pros</div>
<div class="abs nw" style="right:747.60px;transform-origin:100% 0;top:823.00px;font-size:10.5px;line-height:1;font-weight:400;color:#7a7a82;transform:scaleX(0.950);">7</div>
<div class="abs nw" style="right:709.50px;transform-origin:100% 0;top:823.00px;font-size:10.5px;line-height:1;font-weight:400;color:#3a3a42;transform:scaleX(0.950);">12%</div>
<div class="abs" style="left:32.00px;top:840.40px;width:282.50px;height:4.80px;background:#f1f1f2;border-radius:2.4px;"></div>
<div class="abs" style="left:32.00px;top:840.40px;width:33.90px;height:4.80px;background:#06b6d4;border-radius:2.4px;"></div>
<div class="abs nw" style="left:32.00px;transform-origin:0 0;top:858.00px;font-size:12.2px;line-height:1;font-weight:400;color:#24242c;transform:scaleX(1.009);-webkit-text-stroke:0.5px #24242c;">Testers</div>
<div class="abs nw" style="right:747.60px;transform-origin:100% 0;top:859.00px;font-size:10.5px;line-height:1;font-weight:400;color:#7a7a82;transform:scaleX(0.950);">6</div>
<div class="abs nw" style="right:709.50px;transform-origin:100% 0;top:859.00px;font-size:10.5px;line-height:1;font-weight:400;color:#3a3a42;transform:scaleX(0.950);">10%</div>
<div class="abs" style="left:32.00px;top:876.55px;width:282.50px;height:4.80px;background:#f1f1f2;border-radius:2.4px;"></div>
<div class="abs" style="left:32.00px;top:876.55px;width:28.25px;height:4.80px;background:#14b8a6;border-radius:2.4px;"></div>
<div class="abs nw" style="left:32.00px;transform-origin:0 0;top:894.00px;font-size:12.2px;line-height:1;font-weight:400;color:#24242c;transform:scaleX(0.996);-webkit-text-stroke:0.5px #24242c;">OakStone Outdoor Services</div>
<div class="abs nw" style="right:747.60px;transform-origin:100% 0;top:895.00px;font-size:10.5px;line-height:1;font-weight:400;color:#7a7a82;transform:scaleX(0.950);">4</div>
<div class="abs nw" style="right:709.50px;transform-origin:100% 0;top:895.00px;font-size:10.5px;line-height:1;font-weight:400;color:#3a3a42;transform:scaleX(0.950);">7%</div>
<div class="abs" style="left:32.00px;top:912.70px;width:282.50px;height:4.80px;background:#f1f1f2;border-radius:2.4px;"></div>
<div class="abs" style="left:32.00px;top:912.70px;width:19.77px;height:4.80px;background:#22c55e;border-radius:2.4px;"></div>
<div class="abs" style="left:365.30px;top:709.40px;width:22.50px;height:23.40px;background:#fdf1c8;border-radius:12px;"></div>
<svg class="abs" style="left:365.00px;top:709.00px;overflow:visible" width="23" height="23" viewBox="0 0 23 23"><g fill="none" stroke="#c98716" stroke-width="1.1" stroke-linejoin="round"><path d="M13.4 12.8V7.6a1.2 1.2 0 0 0-1.2-1.2H7a1.2 1.2 0 0 0-1.2 1.2v6.2a1.2 1.2 0 0 0 1.2 1.2h.5l.5 2.2 1.6-2.2"/><path d="M10.6 9.6h5.6a1.3 1.3 0 0 1 1.3 1.3v2.9a1.3 1.3 0 0 1-1.3 1.3h-.6l.4 2.1-1.9-2.1h-3.5a1.3 1.3 0 0 1-1.3-1.3v-2.9a1.3 1.3 0 0 1 1.3-1.3Z"/></g></svg>
<div class="abs nw" style="left:396.00px;transform-origin:0 0;top:716.00px;font-size:12.3px;line-height:1;font-weight:400;color:#24242c;transform:scaleX(0.967);-webkit-text-stroke:0.5px #24242c;">Recent Comments</div>
<svg class="abs" style="left:373.10px;top:756.40px" width="17.2" height="17.2" viewBox="0 0 28 28"><defs><clipPath id="cp381_765"><circle cx="14" cy="14" r="12.1"/></clipPath></defs><circle cx="14" cy="14" r="13.2" fill="#fff" stroke="#c98ae8" stroke-width="1.5"/><g clip-path="url(#cp381_765)"><rect width="28" height="28" fill="#b23fd3"/><path d="M2 28c.8-5.5 5.5-7.6 12-7.6s11.2 2.1 12 7.6Z" fill="#1c1a1c"/><rect x="11.6" y="17" width="4.8" height="4.5" fill="#c98a74"/><ellipse cx="14" cy="12.6" rx="5" ry="6" fill="#dca48c"/><path d="M9.2 13.5c.3 3.6 2.2 5.4 4.8 5.4s4.5-1.8 4.8-5.4c-.8 1.6-2.4 2.4-4.8 2.4s-4-.8-4.8-2.4Z" fill="#8a5a48"/><path d="M9 11c0-3.6 2.2-5.4 5-5.4s5 1.8 5 5.4c-.9-1.9-2.6-2.6-5-2.6S9.9 9.1 9 11Z" fill="#6b4636"/></g></svg>
<div class="abs nw" style="left:401.00px;transform-origin:0 0;top:758.00px;font-size:11.7px;line-height:1;font-weight:400;color:#3a3a42;transform:scaleX(1.016);">"This is another comment. This is another</div>
<div class="abs nw" style="left:401.00px;transform-origin:0 0;top:774.00px;font-size:11.7px;line-height:1;font-weight:400;color:#3a3a42;transform:scaleX(1.016);">comment. This is another comment. This is...</div>
<div class="abs nw" style="left:401.00px;transform-origin:0 0;top:797.00px;font-size:10.5px;line-height:1;font-weight:400;color:#4a4a52;transform:scaleX(0.970);-webkit-text-stroke:0.42px #4a4a52;">Tony Ricketts</div>
<div class="abs nw" style="left:466.50px;transform-origin:0 0;top:797.00px;font-size:10.5px;line-height:1;font-weight:400;color:#a0a0a8;transform:scaleX(0.955);">·</div>
<div class="abs nw" style="left:475.00px;transform-origin:0 0;top:797.00px;font-size:10.5px;line-height:1;font-weight:400;color:#7a7a82;transform:scaleX(0.955);">51 days ago</div>
<svg class="abs" style="left:373.10px;top:833.50px" width="17.2" height="17.2" viewBox="0 0 28 28"><defs><clipPath id="cp381_842"><circle cx="14" cy="14" r="12.1"/></clipPath></defs><circle cx="14" cy="14" r="13.2" fill="#fff" stroke="#c98ae8" stroke-width="1.5"/><g clip-path="url(#cp381_842)"><rect width="28" height="28" fill="#b23fd3"/><path d="M2 28c.8-5.5 5.5-7.6 12-7.6s11.2 2.1 12 7.6Z" fill="#1c1a1c"/><rect x="11.6" y="17" width="4.8" height="4.5" fill="#c98a74"/><ellipse cx="14" cy="12.6" rx="5" ry="6" fill="#dca48c"/><path d="M9.2 13.5c.3 3.6 2.2 5.4 4.8 5.4s4.5-1.8 4.8-5.4c-.8 1.6-2.4 2.4-4.8 2.4s-4-.8-4.8-2.4Z" fill="#8a5a48"/><path d="M9 11c0-3.6 2.2-5.4 5-5.4s5 1.8 5 5.4c-.9-1.9-2.6-2.6-5-2.6S9.9 9.1 9 11Z" fill="#6b4636"/></g></svg>
<div class="abs nw" style="left:401.00px;transform-origin:0 0;top:835.00px;font-size:11.7px;line-height:1;font-weight:400;color:#3a3a42;transform:scaleX(1.016);">"Testing the comments here in the auto-</div>
<div class="abs nw" style="left:401.00px;transform-origin:0 0;top:851.00px;font-size:11.7px;line-height:1;font-weight:400;color:#3a3a42;transform:scaleX(1.016);">generated sidebar. Testing the comments...</div>
<div class="abs nw" style="left:401.00px;transform-origin:0 0;top:873.00px;font-size:10.5px;line-height:1;font-weight:400;color:#4a4a52;transform:scaleX(0.970);-webkit-text-stroke:0.42px #4a4a52;">Tony Ricketts</div>
<div class="abs nw" style="left:466.50px;transform-origin:0 0;top:873.00px;font-size:10.5px;line-height:1;font-weight:400;color:#a0a0a8;transform:scaleX(0.955);">·</div>
<div class="abs nw" style="left:475.00px;transform-origin:0 0;top:873.00px;font-size:10.5px;line-height:1;font-weight:400;color:#7a7a82;transform:scaleX(0.955);">51 days ago</div>
<svg class="abs" style="left:373.10px;top:908.90px" width="17.2" height="17.2" viewBox="0 0 28 28"><defs><clipPath id="cp381_917"><circle cx="14" cy="14" r="12.1"/></clipPath></defs><circle cx="14" cy="14" r="13.2" fill="#fff" stroke="#c98ae8" stroke-width="1.5"/><g clip-path="url(#cp381_917)"><rect width="28" height="28" fill="#b23fd3"/><path d="M2 28c.8-5.5 5.5-7.6 12-7.6s11.2 2.1 12 7.6Z" fill="#1c1a1c"/><rect x="11.6" y="17" width="4.8" height="4.5" fill="#c98a74"/><ellipse cx="14" cy="12.6" rx="5" ry="6" fill="#dca48c"/><path d="M9.2 13.5c.3 3.6 2.2 5.4 4.8 5.4s4.5-1.8 4.8-5.4c-.8 1.6-2.4 2.4-4.8 2.4s-4-.8-4.8-2.4Z" fill="#8a5a48"/><path d="M9 11c0-3.6 2.2-5.4 5-5.4s5 1.8 5 5.4c-.9-1.9-2.6-2.6-5-2.6S9.9 9.1 9 11Z" fill="#6b4636"/></g></svg>
<div class="abs nw" style="left:401.00px;transform-origin:0 0;top:911.00px;font-size:11.7px;line-height:1;font-weight:400;color:#3a3a42;transform:scaleX(1.016);">"Test comment"</div>
<div class="abs nw" style="left:401.00px;transform-origin:0 0;top:932.00px;font-size:10.5px;line-height:1;font-weight:400;color:#4a4a52;transform:scaleX(0.970);-webkit-text-stroke:0.42px #4a4a52;">Tony Ricketts</div>
<div class="abs nw" style="left:466.50px;transform-origin:0 0;top:932.00px;font-size:10.5px;line-height:1;font-weight:400;color:#a0a0a8;transform:scaleX(0.955);">·</div>
<div class="abs nw" style="left:475.00px;transform-origin:0 0;top:932.00px;font-size:10.5px;line-height:1;font-weight:400;color:#7a7a82;transform:scaleX(0.955);">63 days ago</div>
<div class="abs" style="left:696.70px;top:709.40px;width:24.00px;height:23.40px;background:#fdf4c4;border-radius:12px;"></div>
<svg class="abs" style="left:697.00px;top:709.00px;overflow:visible" width="24" height="24" viewBox="0 0 24 24"><g fill="none" stroke="#c99a12" stroke-width="1.2" stroke-linejoin="round" stroke-linecap="round"><path d="M8.8 6.4h6.4v2.6a3.2 3.2 0 0 1-6.4 0Z"/><path d="M8.8 7.3H7.6a1.3 1.3 0 0 0 0 2.6h1.5M15.2 7.3h1.2a1.3 1.3 0 0 1 0 2.6h-1.5"/><path d="M11 12.2v1.6M13 12.2v1.6"/><path d="M9.4 13.9h5.2l.8 3.7H8.6Z" fill="#f0cf55"/></g></svg>
<div class="abs nw" style="left:728.40px;transform-origin:0 0;top:716.00px;font-size:12.3px;line-height:1;font-weight:400;color:#24242c;transform:scaleX(0.988);-webkit-text-stroke:0.5px #24242c;">Top Performers</div>
<div class="abs" style="left:697.30px;top:746.90px;width:282.20px;height:54.20px;background:#fefce9;border-radius:8px;border:1px solid #f6eab4"></div>
<svg class="abs" style="left:707.00px;top:764.50px" width="20.4" height="20.4" viewBox="0 0 28 28"><defs><clipPath id="cp717_774"><circle cx="14" cy="14" r="12.1"/></clipPath></defs><circle cx="14" cy="14" r="13.2" fill="#fff" stroke="#c98ae8" stroke-width="1.5"/><g clip-path="url(#cp717_774)"><rect width="28" height="28" fill="#b23fd3"/><path d="M2 28c.8-5.5 5.5-7.6 12-7.6s11.2 2.1 12 7.6Z" fill="#1c1a1c"/><rect x="11.6" y="17" width="4.8" height="4.5" fill="#c98a74"/><ellipse cx="14" cy="12.6" rx="5" ry="6" fill="#dca48c"/><path d="M9.2 13.5c.3 3.6 2.2 5.4 4.8 5.4s4.5-1.8 4.8-5.4c-.8 1.6-2.4 2.4-4.8 2.4s-4-.8-4.8-2.4Z" fill="#8a5a48"/><path d="M9 11c0-3.6 2.2-5.4 5-5.4s5 1.8 5 5.4c-.9-1.9-2.6-2.6-5-2.6S9.9 9.1 9 11Z" fill="#6b4636"/></g></svg>
<div class="abs" style="left:717.40px;top:761.00px;width:13.60px;height:13.60px;background:#f5c51c;border-radius:6.8px;"></div>
<div class="abs nw" style="left:717.4px;top:761px;width:13.6px;height:13.6px;line-height:13.6px;text-align:center;font-size:8.6px;font-weight:700;color:#3d3000">1</div>
<div class="abs nw" style="left:738.30px;transform-origin:0 0;top:759.00px;font-size:12.2px;line-height:1;font-weight:400;color:#24242c;transform:scaleX(0.980);-webkit-text-stroke:0.5px #24242c;">Tony Ricketts</div>
<div class="abs nw" style="left:738.30px;transform-origin:0 0;top:780.00px;font-size:10.5px;line-height:1;font-weight:400;color:#6f6f77;transform:scaleX(0.907);">1 stages</div>
<div class="abs" style="left:781.70px;top:775.60px;width:63.00px;height:16.70px;background:#d8f7e4;border-radius:3px;"></div>
<div class="abs nw" style="left:787.00px;transform-origin:0 0;top:780.00px;font-size:10.5px;line-height:1;font-weight:400;color:#1f8a4c;transform:scaleX(1.014);-webkit-text-stroke:0.42px #1f8a4c;">0% on time</div>
<div class="abs" style="left:969.00px;top:932.00px;width:41.00px;height:41.00px;background:#6e1680;border-radius:20.5px;box-shadow:0 3px 8px rgba(80,20,90,.25)"></div>
<svg class="abs" style="left:979.50px;top:942.00px;overflow:visible" width="20" height="20" viewBox="0 0 20 20"><g fill="none" stroke="#f6e6fa" stroke-width="1.35" stroke-linejoin="round" stroke-linecap="round"><path d="M10 4.6v1.9"/><path d="M4 17.6v-4.6a6 6 0 0 1 12 0v4.6Z"/><path d="M2.4 12.6v3.6M17.6 12.6v3.6"/></g><circle cx="10" cy="3.8" r="1.1" fill="#f6e6fa"/><circle cx="7.4" cy="13.2" r="1.25" fill="#f6e6fa"/><circle cx="12.6" cy="13.2" r="1.25" fill="#f6e6fa"/></svg>
</body></html>
